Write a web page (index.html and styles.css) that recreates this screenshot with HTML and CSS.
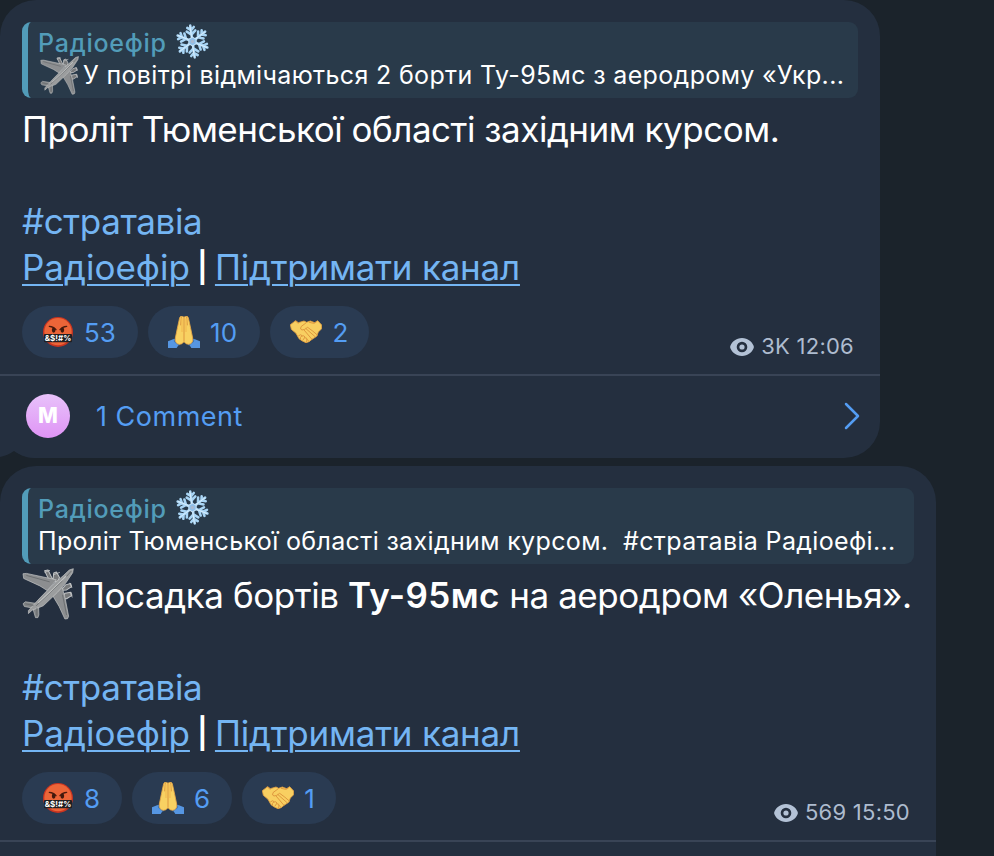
FILE: index.html
```html
<!DOCTYPE html>
<html lang="uk">
<head>
    <meta charset="UTF-8">
    <meta name="viewport" content="width=device-width, initial-scale=1.0">
    <title>Радіоефір</title>
    <link rel="stylesheet" href="styles.css">
</head>
<body>
<svg class="sprite" width="0" height="0">
    <symbol id="snowflake" viewBox="0 0 96 96">
        <g fill="none" stroke="#a9d5f5" stroke-width="7" stroke-linecap="round" transform="rotate(-8 48 48)">
            <path id="arm" d="M48 48V4M48 29L36 19M48 29L60 19M48 17L39 9M48 17L57 9"/>
            <use href="#arm" transform="rotate(60 48 48)"/>
            <use href="#arm" transform="rotate(120 48 48)"/>
            <use href="#arm" transform="rotate(180 48 48)"/>
            <use href="#arm" transform="rotate(240 48 48)"/>
            <use href="#arm" transform="rotate(300 48 48)"/>
        </g>
        <g fill="none" stroke="#dff1fd" stroke-width="2.4" stroke-linecap="round" transform="rotate(-8 48 48)">
            <path d="M47 48V5M47 91V52M48 47L85 27M48 47L11 26M48 49L85 70M48 49L11 69"/>
        </g>
        <path d="M48 36L58 42V54L48 60L38 54V42Z" fill="#8fbfe9" stroke="#c5e3f8" stroke-width="3"/>
        <circle cx="48" cy="48" r="5" fill="#a8b9d0"/>
    </symbol>
    <symbol id="plane" viewBox="0 0 154 154">
        <g stroke="#c3c5c6" stroke-width="3" stroke-linejoin="round" fill="#77797b">
            <path d="M67 8L77 6L86 24L95 42L84 44L76 27ZM94 15L102 12L111 28L104 44L92 34Z"/>
            <path d="M129 50L144 46L147 55L132 65L116 66ZM127 75L145 72L148 81L132 91L115 90Z"/>
            <path d="M67 13L83 7M93 20L112 13M141 44L148 59M141 71L149 87" stroke-width="2.5"/>
        </g>
        <path d="M3 17L13 16L102 35L75 67L53 53L5 31Z" fill="#8c8e90" stroke="#c6c8c8" stroke-width="2"/>
        <path d="M119 57L128 91L138 143L135 150L127 151L110 114L91 82Z" fill="#8c8e90" stroke="#c6c8c8" stroke-width="2"/>
        <path d="M3 106L10 100L43 105L34 119L7 114ZM49 111L50 139L47 147L40 147L33 123Z" fill="#808385" stroke="#bec0c0" stroke-width="2"/>
        <path d="M152 2L150 14L130 44L105 72L63 112L30 125L19 135L19 126L31 113L50 92L92 49L122 23L140 6Z" fill="#9b9d9e" stroke="#c6c8c8" stroke-width="2"/>
        <path d="M146 9L132 25M120 38L42 112M13 22L82 41M120 79L132 139M10 106L34 111M44 119L44 141" fill="none" stroke="#66696c" stroke-width="2.5"/>
        <path d="M130 24L94 60L48 103" fill="none" stroke="#c4c6c6" stroke-width="3"/>
    </symbol>
    <symbol id="cursing" viewBox="0 0 96 96">
        <circle cx="48" cy="48" r="45" fill="#c93420"/>
        <circle cx="48" cy="47" r="41" fill="#ec6538"/>
        <path d="M22 31Q35 32 42 41M74 31Q61 32 54 41" fill="none" stroke="#4a1b0e" stroke-width="4" stroke-linecap="round"/>
        <ellipse cx="35" cy="42" rx="5.5" ry="8" fill="#41190d"/>
        <ellipse cx="61" cy="42" rx="5.5" ry="8" fill="#41190d"/>
        <rect x="6" y="54" width="84" height="25" rx="3" fill="#211f22"/>
        <text x="48" y="75" class="curse-text" textLength="80" lengthAdjust="spacingAndGlyphs">&amp;$!#%</text>
    </symbol>
    <symbol id="pray" viewBox="0 0 96 96">
        <path d="M0 76L19 68L36 80L26 96H0ZM96 76L77 68L60 80L70 96H96Z" fill="#5696e2"/>
        <path d="M17 68L37 84L33 89L18 77ZM79 68L59 84L63 89L78 77Z" fill="#3e77ba"/>
        <path d="M48 4Q43 -1 38 1L35 5L28 37L22 66Q20 83 34 85Q43 85 48 77Q53 85 62 85Q76 83 74 66L68 37L61 5L58 1Q53 -1 48 4Z" fill="#f8d162" stroke="#e6a546" stroke-width="2.5"/>
        <path d="M48 4V76M40 3L38 28M56 3L58 28" fill="none" stroke="#dc963f" stroke-width="3"/>
        <path d="M42 7V48M54 7V48" stroke="#f4bd53" stroke-width="4"/>
    </symbol>
    <symbol id="handshake" viewBox="0 0 96 96">
        <path d="M1 26L17 14L25 20L42 15L50 19L61 15L74 20L83 14L95 27L95 38L85 48L80 61L66 70L57 77L48 80L37 75L27 68L18 52L4 40Z" fill="#f8cf61" stroke="#e5a142" stroke-width="2.5" stroke-linejoin="round"/>
        <path d="M49 20L33 32Q29 41 36 42Q44 42 53 34Q69 45 82 57M48 38L74 61M43 43L65 69M26 59Q33 53 36 59Q29 64 31 69M36 60Q43 57 45 63L39 72M45 65Q52 64 51 72L48 79M17 15L24 22M78 19L71 22L58 19M51 70L57 76" fill="none" stroke="#df983e" stroke-width="3" stroke-linecap="round" stroke-linejoin="round"/>
    </symbol>
    <symbol id="eye" viewBox="0 0 24 18">
        <path fill-rule="evenodd" d="M12 0C6 0 2 4 .5 7.5Q-.2 9 .5 10.5C2 14 6 18 12 18S22 14 23.5 10.5Q24.2 9 23.5 7.5C22 4 18 0 12 0ZM12 3.7A5.3 5.3 0 1 1 12 14.300A5.3 5.3 0 1 1 12 3.7Z"/>
        <circle cx="12" cy="9" r="2.6"/>
    </symbol>
</svg>

<div class="chat">
    <div class="message first">
        <svg class="tail" viewBox="0 0 36 38"><path d="M0 0H36V38H34C26 38 20 35 14 31C10 34 5 36 0 37Z"/></svg>
        <div class="reply">
            <div class="reply-title"><span>Радіоефір</span><svg class="flake"><use href="#snowflake"/></svg></div>
            <div class="reply-text"><svg class="plane-small"><use href="#plane"/></svg><span>У повітрі відмічаються 2 борти Ту-95мс з аеродрому «Укр...</span></div>
        </div>
        <div class="text">
            <div class="line"><span class="headline">Проліт Тюменської області західним курсом.</span></div>
            <div class="line"></div>
            <div class="line"><a class="hashtag">#стратавіа</a></div>
            <div class="line"><a class="link">Радіоефір</a><span class="bar">|</span><a class="link support">Підтримати канал</a></div>
        </div>
        <div class="bottom">
            <div class="reactions">
                <div class="reaction"><svg><use href="#cursing"/></svg><span>53</span></div>
                <div class="reaction ten"><svg><use href="#pray"/></svg><span>10</span></div>
                <div class="reaction"><svg><use href="#handshake"/></svg><span>2</span></div>
            </div>
            <div class="meta"><svg><use href="#eye"/></svg><span>3K 12:06</span></div>
        </div>
        <div class="comments">
            <div class="avatar">M</div>
            <span class="comment-count">1 Comment</span>
            <svg class="chevron" viewBox="0 0 16 28"><path d="M2 2L14 14L2 26"/></svg>
        </div>
    </div>

    <div class="message second">
        <div class="reply">
            <div class="reply-title"><span>Радіоефір</span><svg class="flake"><use href="#snowflake"/></svg></div>
            <div class="reply-text"><span>Проліт Тюменської області західним курсом.&nbsp; #стратавіа Радіоефі...</span></div>
        </div>
        <div class="text">
            <div class="line"><svg class="plane-big"><use href="#plane"/></svg><span class="landing">Посадка бортів <b>Ту-95мс</b> на аеродром «Оленья».</span></div>
            <div class="line"></div>
            <div class="line"><a class="hashtag">#стратавіа</a></div>
            <div class="line"><a class="link">Радіоефір</a><span class="bar">|</span><a class="link support">Підтримати канал</a></div>
        </div>
        <div class="bottom">
            <div class="reactions">
                <div class="reaction"><svg><use href="#cursing"/></svg><span>8</span></div>
                <div class="reaction"><svg><use href="#pray"/></svg><span>6</span></div>
                <div class="reaction"><svg><use href="#handshake"/></svg><span>1</span></div>
            </div>
            <div class="meta"><svg><use href="#eye"/></svg><span>569 15:50</span></div>
        </div>
    </div>
</div>
</body>
</html>
```

FILE: styles.css
```css
* {
    box-sizing: border-box;
}

body {
    margin: 0;
    height: 856px;
    overflow: hidden;
    background: #1b232b;
    color: #fff;
    font-family: Inter, "Noto Sans", sans-serif;
}

.sprite {
    position: absolute;
}

.chat {
    display: flex;
    flex-direction: column;
    align-items: flex-start;
    gap: 8px;
}

.message {
    position: relative;
    padding-top: 22px;
    background: #242f3f;
}

.first {
    width: 880px;
    height: 458px;
    border-radius: 36px;
}

.second {
    width: 936px;
    height: 390px;
    border-radius: 36px 36px 0 0;
}

.reply {
    height: 76px;
    margin: 0 22px;
    padding: 5px 0 0 10px;
    background: #293a4a;
    border-left: 6px solid #529cb9;
    border-radius: 9px;
    white-space: nowrap;
}

.reply-title,
.reply-text {
    display: flex;
    align-items: center;
    height: 32px;
    font-size: 25px;
    line-height: 32px;
    letter-spacing: 0.35px;
}

.reply-title {
    color: #529cb9;
    font-weight: 500;
    letter-spacing: 0.75px;
}

.flake {
    width: 35px;
    height: 35px;
    margin: -4px 0 0 8px;
}

.plane-small {
    flex: none;
    width: 39px;
    height: 39px;
    margin: 0 4px 0 2px;
}

.text {
    padding: 8px 22px 0;
    font-size: 35px;
    line-height: 46px;
    white-space: nowrap;
}

.line {
    display: flex;
    align-items: center;
    height: 46px;
}

.plane-big {
    flex: none;
    width: 52px;
    height: 52px;
    margin: -2px 5px 0 0;
}

.headline {
    letter-spacing: -0.49px;
}

.landing {
    letter-spacing: -0.44px;
}

b {
    font-weight: 600;
    letter-spacing: 0.4px;
}

.hashtag,
.link {
    color: #74b5f3;
}

.hashtag {
    letter-spacing: -0.4px;
}

.link {
    text-decoration: underline;
    text-decoration-thickness: 2px;
    text-underline-offset: 4px;
}

.support {
    letter-spacing: -0.22px;
}

.bar {
    width: 25px;
    font-size: 30px;
    font-weight: 600;
    text-align: center;
}

.bottom {
    display: flex;
    justify-content: space-between;
    height: 86px;
    padding: 16px 26px 0 22px;
    border-bottom: 2px solid #394456;
}

.reactions {
    display: flex;
    gap: 10px;
}

.reaction {
    display: flex;
    align-items: center;
    gap: 10px;
    height: 52px;
    padding: 0 22px 0 20px;
    background: #2a3b52;
    border-radius: 26px;
    color: #549df3;
    font-size: 26px;
}

.reaction svg {
    width: 32px;
    height: 32px;
}

.reaction.ten {
    padding-right: 23px;
    letter-spacing: 0.3px;
}

.reaction:nth-child(3) {
    padding-right: 21px;
}

.curse-text {
    fill: #fff;
    font-size: 24px;
    font-weight: 700;
    text-anchor: middle;
}

.meta {
    display: flex;
    align-items: center;
    gap: 7px;
    height: 28px;
    margin-top: 26px;
    color: #aebccf;
    font-size: 22px;
    letter-spacing: 0.25px;
}

.meta svg {
    width: 24px;
    height: 18px;
    margin-top: 1px;
    fill: #b3c2d6;
}

.comments {
    position: relative;
    display: flex;
    align-items: center;
    height: 80px;
    padding: 0 20px 0 26px;
    color: #549df3;
    font-size: 27px;
}

.comment-count {
    letter-spacing: 0.5px;
}

.avatar {
    width: 44px;
    height: 44px;
    margin-right: 26px;
    border-radius: 50%;
    background: linear-gradient(#e8c2fa, #df94f5);
    color: #fff;
    font-size: 21px;
    font-weight: 800;
    line-height: 44px;
    text-align: center;
}

.chevron {
    width: 16px;
    height: 28px;
    margin-left: auto;
    fill: none;
    stroke: #549df3;
    stroke-width: 2.5;
    stroke-linecap: round;
    stroke-linejoin: round;
}

.tail {
    position: absolute;
    left: 0;
    bottom: 0;
    width: 36px;
    height: 38px;
    fill: #242f3f;
}
```
